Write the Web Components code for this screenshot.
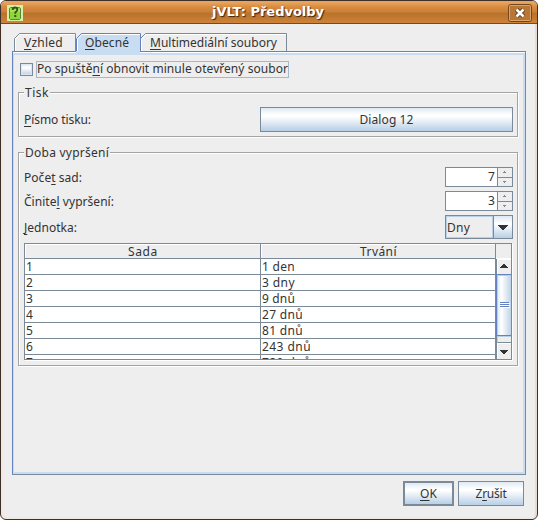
<!DOCTYPE html>
<html lang="cs"><head><meta charset="utf-8"><title>jVLT: Předvolby</title>
<style>
html,body{margin:0;width:538px;height:520px;overflow:hidden;background:#fff}
body{font:12px "Noto Sans","DejaVu Sans",sans-serif;color:#333}
</style></head><body>
<j-window caption="jVLT: Předvolby">
 <j-tabs>
  <j-tab slot="tabs" style="width:62px"><j-text w="39"><u>V</u>zhled</j-text></j-tab>
  <j-tab slot="tabs" active style="width:65px"><j-text w="44"><u>O</u>becné</j-text></j-tab>
  <j-tab slot="tabs" style="width:147px;margin-left:-1px"><j-text w="127"><u>M</u>ultimediální soubory</j-text></j-tab>
  <j-check><j-text w="251">Po spuště<u>n</u>í obnovit minule otevřený soubor</j-text></j-check>
  <j-group style="height:45px;margin-top:14px"><j-text slot="title" w="24">Tisk</j-text>
   <j-row style="height:25px;margin-top:14px"><j-text w="67"><u>P</u>ísmo tisku:</j-text><j-button slot="field" style="width:253px;height:25px"><j-text w="54">Dialog 12</j-text></j-button></j-row>
  </j-group>
  <j-group style="height:214px;margin-top:15px"><j-text slot="title" w="84">Doba vypršení</j-text>
   <j-row style="height:20px;margin-top:14px"><j-text class="low" w="58">Poče<u>t</u> sad:</j-text><j-spinner slot="field"><j-text w="7">7</j-text></j-spinner></j-row>
   <j-row style="height:20px;margin-top:4px"><j-text class="low" w="90">Činite<u>l</u> vypršení:</j-text><j-spinner slot="field"><j-text w="7">3</j-text></j-spinner></j-row>
   <j-row style="height:24px;margin-top:4px"><j-text class="low" w="53"><u>J</u>ednotka:</j-text><j-combo slot="field"><j-text w="23">Dny</j-text></j-combo></j-row>
   <j-table></j-table>
  </j-group>
 </j-tabs>
 <j-button slot="actions" primary style="width:51px;height:25px"><j-text w="17"><u>O</u>K</j-text></j-button>
 <j-button slot="actions" style="width:66px;height:25px"><j-text w="31">Z<u>r</u>ušit</j-text></j-button>
</j-window>
<script>
function define(name, html, ready){
  const t=document.createElement('template'); t.innerHTML=html;
  customElements.define(name, class extends HTMLElement{
    connectedCallback(){
      if(this.shadowRoot) return;
      this.attachShadow({mode:'open'}).append(t.content.cloneNode(true));
      if(ready) ready(this,this.shadowRoot);
    }
  });
}
/* A caption spaced out to the width given in its w attribute. */
define('j-text',`<style>
:host{display:inline-block;white-space:pre;line-height:16px;height:16px}
span{display:inline-block}
:host(.low){padding-top:2px}
::slotted(u){text-decoration:underline;text-decoration-thickness:1px;text-underline-offset:2px;text-decoration-skip-ink:none}
</style><span><slot></slot></span>`,(el,r)=>{
  const w=+el.getAttribute('w'), s=r.querySelector('span');
  if(!w) return;
  const n=el.textContent.length, natural=s.getBoundingClientRect().width;
  if(n>1) s.style.letterSpacing=((w-natural)/n)+'px';
  el.style.width=w+'px';
});
define('j-button',`<style>
:host{display:flex;box-sizing:border-box;align-items:center;justify-content:center;border:1px solid #7a8a99;background:linear-gradient(#dfe9f3 0,#fff 30%,#fff 36%,#b8cfe5 100%);flex:none}
:host([primary]){border-width:2px}
</style><slot></slot>`);
define('j-check',`<style>
:host{display:flex;align-items:center;height:18px;gap:3px;padding-left:2px}
i{box-sizing:border-box;width:13px;height:13px;border:1px solid #7a8a99;background:linear-gradient(#dde8f3,#fff 35%,#b8cfe5);box-shadow:inset 0 0 0 1px #dbe6f1}
span{box-sizing:border-box;height:17px;width:253px;border:1px solid #a3b8cc;display:flex;align-items:center}
</style><i></i><span><slot></slot></span>`);
define('j-group',`<style>
:host{display:block;box-sizing:border-box;width:500px;border:1px solid #a3a3a3;box-shadow:1px 1px 0 #fff,inset 1px 1px 0 #fff;padding:0 4px 0 5px}
header{height:0;position:relative}
header span{position:absolute;left:0;top:-9px;height:16px;background:#eee;padding:0 1px}
</style><header><span><slot name="title"></slot></span></header><slot></slot>`);
define('j-row',`<style>
:host{display:flex;align-items:center;justify-content:space-between}
</style><slot></slot><slot name="field"></slot>`);
define('j-spinner',`<style>
:host{display:grid;grid-template-columns:51px 15px;box-sizing:border-box;width:68px;height:20px;border:1px solid #7a8a99;background:#fff}
.v{display:flex;justify-content:flex-end;align-items:center;padding-right:2px;font-size:12px}
.b{box-sizing:border-box;border-left:1px solid #7a8a99;display:grid;grid-template-rows:9px 9px;background:#eee;width:15px}
.b svg{display:block;width:14px;height:9px}
.b svg+svg{border-top:1px solid #7a8a99;box-sizing:border-box}
</style><div class="v"><slot></slot></div><div class="b"><svg><path d="M6 3h1v1h1v1H5V4h1z" fill="#7a8a99"/></svg><svg><path d="M5 3h3v1H7v1H6V4H5z" fill="#7a8a99"/></svg></div>`);
define('j-combo',`<style>
:host{display:flex;box-sizing:border-box;width:68px;height:24px;border:1px solid #7a8a99;background:#eee}
.v{box-sizing:border-box;width:47px;border:1px solid #b8cfe5;padding:2px 0 0 1px}
.v ::slotted(*){margin-left:-1px}
.a{width:18px;border-left:1px solid #7a8a99;background:linear-gradient(#dde8f3,#fff 35%,#b8cfe5)}
svg{display:block}
</style><div class="v"><slot></slot></div><div class="a"><svg width="18" height="22"><path d="M4 9h10v1h-1v1h-1v1h-1v1h-1v1H8v-1H7v-1H6v-1H5v-1H4z" fill="#333"/></svg></div>`);
define('j-scroll',`<style>
:host{display:flex;flex-direction:column;width:16px;height:100px;background:#eee;box-sizing:border-box;border-left:1px solid #7a8a99}
svg{display:block;flex:none}
.t{box-sizing:border-box;height:62px;border:1px solid #6382bf;border-right:0;background:linear-gradient(90deg,#dbe7f3,#fff 30%,#b8cfe5);box-shadow:inset 1px 1px 0 #b8cfe5;display:flex;align-items:center;justify-content:center;margin-left:-1px}
.s{height:7px;box-sizing:border-box;border:1px solid #b8cfe5;border-bottom:1px solid #7a8a99}
</style><svg width="15" height="15"><path d="M0 0h15v1H1v14H0z" fill="#fff"/><path d="M6 5h2v1h1v1h1v1h1v1H3V8h1V7h1V6h1z" fill="#333"/></svg>
<div class="t"><svg width="10" height="6"><path d="M0 .5h9M0 2.5h9M0 4.5h9" stroke="#6382bf"/><path d="M1 1.5h9M1 3.5h9M1 5.5h9" stroke="#fff"/></svg></div><div class="s"></div>
<svg width="15" height="16"><path d="M0 0h15v1H1v14H0z" fill="#fff"/><path d="M3 7h8v1h-1v1H9v1H8v1H6v-1H5V9H4V8H3z" fill="#333"/></svg>`);
define('j-table',`<style>
:host{display:flex;box-sizing:border-box;width:488px;height:117px;margin-top:4px;border:1px solid #7a8a99;box-shadow:1px 1px 0 #fff;overflow:hidden}
.g{width:471px;background:#fff}
.r{display:grid;grid-template-columns:236px 235px;height:16px}
.r>div{box-sizing:border-box;height:16px;border-right:1px solid #7a8a99;border-bottom:1px solid #7a8a99;padding-left:1px;white-space:nowrap}
.r j-text{display:block}
.h{height:15px}.h>div{height:15px;background:#eee;box-shadow:inset 1px 1px 0 #fff}
.h j-text{margin:0 auto}
.s{width:16px;background:#eee;flex:none}.s:before{content:"";display:block;height:15px;box-sizing:border-box;border-bottom:1px solid #fff}
</style><div class="g"></div><div class="s"><j-scroll></j-scroll></div>`,(el,r)=>{
  const cell=(s,w)=>`<div><j-text w="${w}">${s}</j-text></div>`;
  const rows=[['1','1 den',33],['2','3 dny',33],['3','9 dnů',33],['4','27 dnů',41],['5','81 dnů',41],['6','243 dnů',49],['7','729 dnů',49]];
  r.querySelector('.g').innerHTML=`<div class="r h">${cell('Sada',30)}${cell('Trvání',37)}</div>`+rows.map(x=>`<div class="r">${cell(x[0],8)}${cell(x[1],x[2])}</div>`).join('');
});
define('j-tab',`<style>
:host{display:block;height:18px;position:relative;flex:none}
svg{position:absolute;left:0;top:0;overflow:visible}
span{position:absolute;left:10px;top:1px}
:host([active]) span{left:9px}
</style><svg></svg><span><slot></slot></span>`,(el,r)=>{
  const a=el.hasAttribute('active'), w=parseInt(el.style.width);
  const s=r.querySelector('svg'); s.setAttribute('width',w+1); s.setAttribute('height',22);
  s.innerHTML=a?`<path d="M0 6L6 0H${w-1}V22H0z" fill="#c8ddf2"/><path d="M.5 18V5.5l5-5H${w-.5}V18" stroke="#6382bf" fill="none"/><path d="M1.5 18V6l4.5-4.5H${w-1}" stroke="#fff" fill="none"/>`
   :`<path d="M.5 18V5.5l5-5H${w-.5}V18" stroke="#7a8a99" fill="none"/><path d="M1.5 18V6l4.5-4.5H${w-1}" stroke="#fff" fill="none"/>`;
  if(a) el.style.zIndex=1;
});
define('j-tabs',`<style>
:host{display:block;margin:9px 12px 0 11px}
nav{display:flex;height:18px;padding-left:2px}
main{box-sizing:border-box;width:514px;height:424px;border:1px solid #7a8a99;border-top-color:#6382bf;border-left-color:#6382bf;box-shadow:inset 0 1px 0 #fff,inset 1px 3px 0 #c8ddf2,inset -2px -2px 0 #c8ddf2;padding:8px 5px 0}
</style><nav><slot name="tabs"></slot></nav><main><slot></slot></main>`);
define('j-window',`<style>
:host{display:block;box-sizing:border-box;width:538px;height:520px;border:1px solid #3d302b;border-radius:6px;background:#eee;overflow:hidden;box-shadow:inset 2px -2px 1px #f0e9e2,inset -2px 0 1px #e5dacf}
header{box-sizing:border-box;height:23px;background:linear-gradient(#eaa65e 0,#d78a40 25%,#cb8038 48%,#b9722d 52%,#c37a33 80%,#cf8438 100%);border-bottom:1px solid #754a22;border-top:1px solid #e6a461;display:grid;grid-template-columns:30px 1fr 30px;align-items:center}
header svg{display:block}
.i{margin-left:6px}
.c{text-align:center;color:#fff;font:bold 13px "DejaVu Sans",sans-serif;text-shadow:1px 1px 1px #3c240f;line-height:18px;margin:-2px 2px 0 0}
footer{display:flex;justify-content:flex-end;gap:4px;padding:6px 13px 0 0}
</style><header><svg class="i" width="16" height="16"><rect width="16" height="16" fill="#d4f0a4"/><path d="M2.5 3.5l1-1h9l1 1v10l-1 1h-9l-1-1z" fill="#8fd63c" stroke="#5d8535"/><path d="M3 4h10v3H3z" fill="#a5e15a"/><path d="M5.7 5Q5.7 2.5 8 2.5T10.3 4.8Q10.3 6.3 8.3 7.4V8.8M7.3 11h2" fill="none" stroke="#35501b" stroke-width="1.8"/></svg>
<div class="c"></div>
<svg width="24" height="19" style="margin:-1px 0 0 1px"><rect x=".5" y="1.5" width="23" height="17" rx="2" fill="none" stroke="#724720"/><rect x="1.5" y="2.5" width="21" height="15" rx="1" fill="#b97634" stroke="#dba369"/><path d="M8.5 6.5l7 7m0-7l-7 7" stroke="#59351a" stroke-width="4.5"/><path d="M8.5 6.5l7 7m0-7l-7 7" stroke="#fff" stroke-width="2.6"/></svg></header>
<slot></slot><footer><slot name="actions"></slot></footer>`,(el,r)=>{
  const n=document.createElement('j-text');
  n.setAttribute('w','112'); n.textContent=el.getAttribute('caption'); r.querySelector('.c').append(n);
});
</script></body></html>
